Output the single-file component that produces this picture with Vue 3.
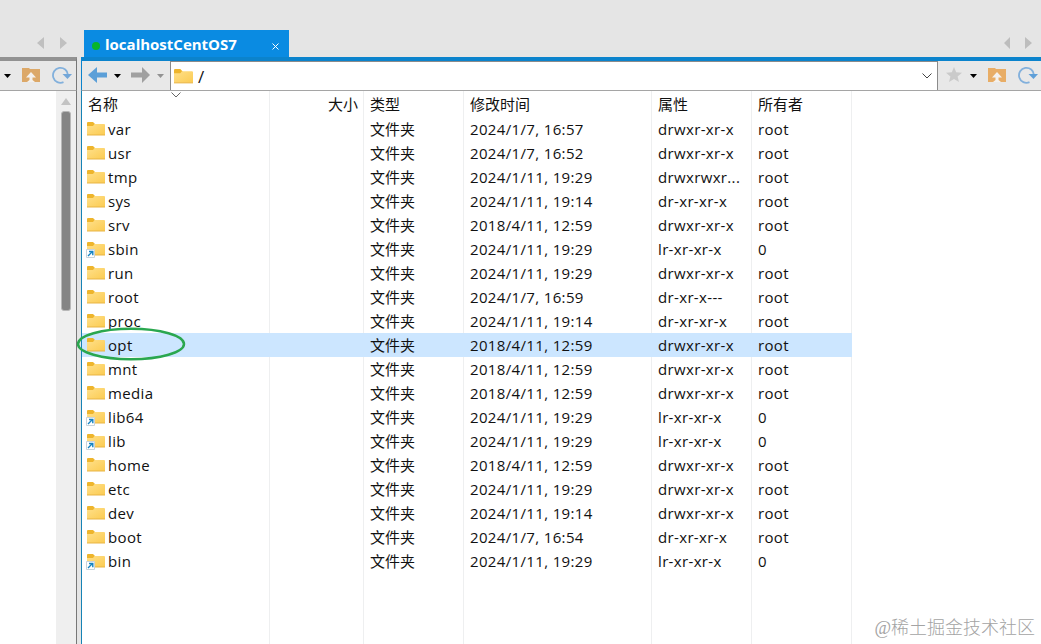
<template>
  <div class="app">
    <aside class="left-pane">
      <div class="tab-strip">
        <svg class="strip-arrows" width="30" height="12" viewBox="0 0 30 12">
          <path d="M7 0v12L0 6zM23 0v12l7-6z" fill="#c0c0c0" />
        </svg>
      </div>
      <div class="toolbar">
        <svg class="caret" width="7" height="4" viewBox="0 0 7 4"><path d="M0 0h7L3.5 4z" /></svg>
        <svg class="folder-up" width="18" height="16" viewBox="0 0 18 16">
          <path d="M0 1h7l1 1h10v13H0z" fill="#dca868" />
          <path d="M9 5l5 5.5h-3.5V13L13 15H5l2.5-2v-2.500H4z" fill="#f4f1ed" />
        </svg>
        <svg class="reload" width="20" height="18" viewBox="0 0 20 18">
          <path d="M11.500 16.200A7.500 7.500 0 1 1 16 9" fill="none" stroke="#82b0dc" stroke-width="1.800" />
          <path d="M10.500 8H20l-4.500 5z" fill="#74a7d8" />
        </svg>
      </div>
      <div class="left-body">
        <div class="scrollbar">
          <svg width="10" height="7" viewBox="0 0 10 7"><path d="M5 0l5 7H0z" fill="#c3c3c3" /></svg>
          <div class="thumb"></div>
        </div>
      </div>
    </aside>

    <main class="right-pane">
      <div class="tab-strip">
        <div class="tab">
          <span class="dot"></span>
          <span class="tab-title">localhostCentOS7</span>
          <svg class="close" width="7" height="7" viewBox="0 0 7 7">
            <path d="M.5.5l6 6m0-6l-6 6" stroke="#fff" stroke-width="1" />
          </svg>
        </div>
        <svg class="strip-arrows" width="28" height="12" viewBox="0 0 28 12">
          <path d="M6 0v12L0 6zM21 0v12l7-6z" fill="#bdbdbd" />
        </svg>
      </div>

      <div class="toolbar">
        <svg class="back" width="19" height="16" viewBox="0 0 19 16">
          <path d="M0 8l9-8v5.500h10v5H9V16z" fill="#5b9fd8" />
        </svg>
        <svg class="caret" width="7" height="4" viewBox="0 0 7 4"><path d="M0 0h7L3.5 4z" /></svg>
        <svg class="forward" width="19" height="16" viewBox="0 0 19 16">
          <path d="M19 8l-8-8v5.500H0v5h11V16z" fill="#a0a0a0" />
        </svg>
        <svg class="caret caret-off" width="7" height="4" viewBox="0 0 7 4"><path d="M0 0h7L3.5 4z" /></svg>
        <div class="address">
          <svg width="19" height="15" viewBox="0 0 18 14">
            <use href="#folder-shape" />
          </svg>
          <span class="path">/</span>
          <svg class="chevron" width="10" height="6" viewBox="0 0 10 6">
            <path d="M.5.5L5 5 9.5.5" fill="none" stroke="#444" />
          </svg>
        </div>
        <svg class="star" width="16" height="15" viewBox="0 0 16 15">
          <path d="M8 0l2.200 5.200 5.800.5-4.400 3.700L13 15l-5-3-5 3 1.400-5.600L0 5.700l5.800-.5z" fill="#cacaca" />
        </svg>
        <svg class="caret" width="7" height="4" viewBox="0 0 7 4"><path d="M0 0h7L3.5 4z" /></svg>
        <svg class="folder-up" width="18" height="16" viewBox="0 0 18 16">
          <path d="M0 1h7l1 1h10v13H0z" fill="#e8ad66" />
          <path d="M9 5l5 5.500h-3.500V13L13 15H5l2.500-2v-2.500H4z" fill="#f4f1ed" />
        </svg>
        <svg class="reload" width="20" height="18" viewBox="0 0 20 18">
          <path d="M11.500 16.200A7.500 7.500 0 1 1 16 9" fill="none" stroke="#82b0dc" stroke-width="1.800" />
          <path d="M10.500 8H20l-4.500 5z" fill="#5e9fd8" />
        </svg>
      </div>

      <div class="list">
        <svg class="sort-mark" width="10" height="6" viewBox="0 0 10 6">
          <path d="M.5.5L5 5 9.5.5" fill="none" stroke="#666" />
        </svg>
        <div class="lines">
          <i v-for="n in 6" :key="n"></i>
        </div>
        <div class="row head">
          <span>名称</span>
          <span class="size">大小</span>
          <span>类型</span>
          <span>修改时间</span>
          <span>属性</span>
          <span>所有者</span>
        </div>
        <div v-for="file in files" :key="file.name" class="row" :class="{ selected: file.name === 'opt' }">
          <span class="name">
            <svg class="icon" width="20" height="20" viewBox="0 0 20 20">
              <use href="#folder-shape" x="1" y="3" />
              <g v-if="file.link">
                <path d="M.5 10.500h8v8h-8z" fill="#fff" stroke="#c9d3db" />
                <path d="M2 17l4.500-4.500M3 12.500h3.800v3.800" fill="none" stroke="#1683c2" stroke-width="1.400" />
              </g>
            </svg>
            <span class="latin">{{ file.name }}</span>
          </span>
          <span></span>
          <span>文件夹</span>
          <span class="latin">{{ file.time }}</span>
          <span class="latin">{{ file.attr }}</span>
          <span class="latin">{{ file.owner }}</span>
        </div>
        <svg class="ring" width="110" height="34" viewBox="0 0 110 34">
          <ellipse cx="55" cy="17" rx="53" ry="15.200" fill="none" stroke="#2aa74f" stroke-width="2.500" />
        </svg>
      </div>
    </main>

    <div class="watermark">@稀土掘金技术社区</div>

    <svg class="defs" width="0" height="0">
      <defs>
        <linearGradient id="folder-fill" x1="0" y1="0" x2="1" y2="1">
          <stop offset="0" stop-color="#ffe08a" />
          <stop offset="1" stop-color="#fbcb52" />
        </linearGradient>
        <g id="folder-shape">
          <path d="M0 1a1 1 0 0 1 1-1h5l2 2v3H0z" fill="#eeb52c" />
          <path d="M0 4h6l1.500-2H17a1 1 0 0 1 1 1v10H0z" fill="url(#folder-fill)" />
          <path d="M0 12.500h18v1H0z" fill="#e9b544" />
        </g>
      </defs>
    </svg>
  </div>
</template>

<script setup>
const rows = [
  ['var', '2024/1/7, 16:57', 'drwxr-xr-x', 'root'],
  ['usr', '2024/1/7, 16:52', 'drwxr-xr-x', 'root'],
  ['tmp', '2024/1/11, 19:29', 'drwxrwxr...', 'root'],
  ['sys', '2024/1/11, 19:14', 'dr-xr-xr-x', 'root'],
  ['srv', '2018/4/11, 12:59', 'drwxr-xr-x', 'root'],
  ['sbin', '2024/1/11, 19:29', 'lr-xr-xr-x', '0'],
  ['run', '2024/1/11, 19:29', 'drwxr-xr-x', 'root'],
  ['root', '2024/1/7, 16:59', 'dr-xr-x---', 'root'],
  ['proc', '2024/1/11, 19:14', 'dr-xr-xr-x', 'root'],
  ['opt', '2018/4/11, 12:59', 'drwxr-xr-x', 'root'],
  ['mnt', '2018/4/11, 12:59', 'drwxr-xr-x', 'root'],
  ['media', '2018/4/11, 12:59', 'drwxr-xr-x', 'root'],
  ['lib64', '2024/1/11, 19:29', 'lr-xr-xr-x', '0'],
  ['lib', '2024/1/11, 19:29', 'lr-xr-xr-x', '0'],
  ['home', '2018/4/11, 12:59', 'drwxr-xr-x', 'root'],
  ['etc', '2024/1/11, 19:29', 'drwxr-xr-x', 'root'],
  ['dev', '2024/1/11, 19:14', 'drwxr-xr-x', 'root'],
  ['boot', '2024/1/7, 16:54', 'dr-xr-xr-x', 'root'],
  ['bin', '2024/1/11, 19:29', 'lr-xr-xr-x', '0']
]

// 软链接的属性以 l 开头
const files = rows.map(([name, time, attr, owner]) => ({
  name,
  time,
  attr,
  owner,
  link: attr.startsWith('l')
}))
</script>

<style>
body {
  margin: 0;
  overflow: hidden;
}
</style>

<style scoped>
.app {
  position: relative;
  display: flex;
  width: 1041px;
  height: 644px;
  overflow: hidden;
  background: #e5e5e5;
  color: #111;
  font-family: 'Open Sans', 'Noto Sans CJK SC', sans-serif;
  font-size: 15px;
}

svg {
  display: block;
  flex: none;
}

.left-pane {
  display: flex;
  flex-direction: column;
  flex: none;
  box-sizing: border-box;
  width: 77px;
}

.tab-strip {
  display: flex;
  flex: none;
  height: 57px;
}

.left-pane .strip-arrows {
  margin: 37px 0 0 37px;
}

.toolbar {
  display: flex;
  align-items: center;
  flex: none;
  box-sizing: border-box;
  height: 34px;
  border-bottom: 1px solid #a5a5a5;
  background: #e8e8e8;
}

.left-pane .toolbar {
  padding-left: 4px;
  border-top: 4px solid #929292;
  border-right: 1px solid #777;
}

.left-pane .folder-up {
  margin-left: 11px;
}

.left-pane .reload {
  margin-left: 12px;
}

.toolbar .folder-up,
.toolbar .reload,
.toolbar .star,
.toolbar .back,
.toolbar .forward {
  margin-bottom: 2px;
}

.left-body {
  display: flex;
  justify-content: flex-end;
  flex: 1;
  border-right: 1px solid #777;
  background: #fff;
}

.scrollbar {
  display: flex;
  flex-direction: column;
  align-items: center;
  width: 20px;
  padding-top: 7px;
  background: #efefef;
}

.thumb {
  box-sizing: border-box;
  width: 10px;
  height: 200px;
  margin-top: 6px;
  border: 1px solid #b8b8b8;
  border-radius: 3px;
  background: #858585;
}

.right-pane {
  display: flex;
  flex-direction: column;
  flex: 1;
  min-width: 0;
  margin-left: 4px;
}

.right-pane .tab-strip {
  align-items: flex-end;
}

.tab {
  display: flex;
  align-items: center;
  box-sizing: border-box;
  width: 205px;
  height: 27px;
  margin-left: 3px;
  padding: 0 10px 0 8px;
  background: #0a8be2;
  color: #fff;
}

.dot {
  width: 8px;
  height: 8px;
  margin-top: 5px;
  border-radius: 50%;
  background: #08b52b;
}

.tab-title {
  flex: 1;
  margin: 1px 0 0 5px;
  font-size: 15px;
  font-weight: 700;
}

.close {
  margin-top: 5px;
}

.right-pane .strip-arrows {
  margin: 0 9px 8px auto;
}

.right-pane .toolbar {
  padding-left: 6px;
  border-top: 4px solid #0b83cc;
  border-left: 1px solid #0b83cc;
}

.right-pane .caret {
  margin-left: 7px;
}

.caret-off {
  fill: #929292;
}

.forward {
  margin-left: 10px;
}

.address {
  display: flex;
  align-items: center;
  box-sizing: border-box;
  width: 768px;
  height: 29px;
  margin-left: 6px;
  padding: 0 5px 0 3px;
  border: 1px solid #8b8b8b;
  border-bottom: none;
  background: #fff;
}

.path {
  flex: 1;
  margin-left: 5px;
  padding-top: 2px;
  font-size: 17px;
  line-height: 24px;
}

.star {
  margin-left: 8px;
}

.right-pane .toolbar .star + .caret {
  margin-left: 8px;
}

.right-pane .folder-up {
  margin-left: 11px;
}

.right-pane .reload {
  margin-left: 12px;
}

.list {
  position: relative;
  flex: 1;
  border-left: 1px solid #1783b5;
  background: #fff;
}

.lines,
.row {
  display: grid;
  grid-template-columns: 188px 94px 100px 188px 100px 100px;
  width: 770px;
}

/* 列分隔线铺满整个列表 */
.lines {
  position: absolute;
  inset: 0 auto 0 0;
}

.lines i {
  border-right: 1px solid #eeeff0;
}

.row {
  position: relative;
  align-items: center;
  height: 24px;
}

.row > span {
  padding-left: 6px;
  white-space: nowrap;
  line-height: 24px;
}

.row.head {
  height: 26px;
}

.row .size {
  padding-right: 6px;
  text-align: right;
}

.row .name {
  display: flex;
  align-items: center;
  padding-left: 4px;
}

.icon {
  margin-right: 2px;
}

.latin {
  letter-spacing: 0.35px;
}

.selected {
  background: #cce6ff;
}

.sort-mark {
  position: absolute;
  left: 89px;
  top: 1px;
}

.ring {
  position: absolute;
  left: -6px;
  top: 236px;
}

.watermark {
  position: absolute;
  right: 6px;
  bottom: 3px;
  color: #a3a3a3;
  font-family: 'Liberation Serif', 'Noto Sans CJK SC', sans-serif;
  font-size: 18px;
  font-weight: 300;
  line-height: 26px;
}

.defs {
  position: absolute;
}
</style>
